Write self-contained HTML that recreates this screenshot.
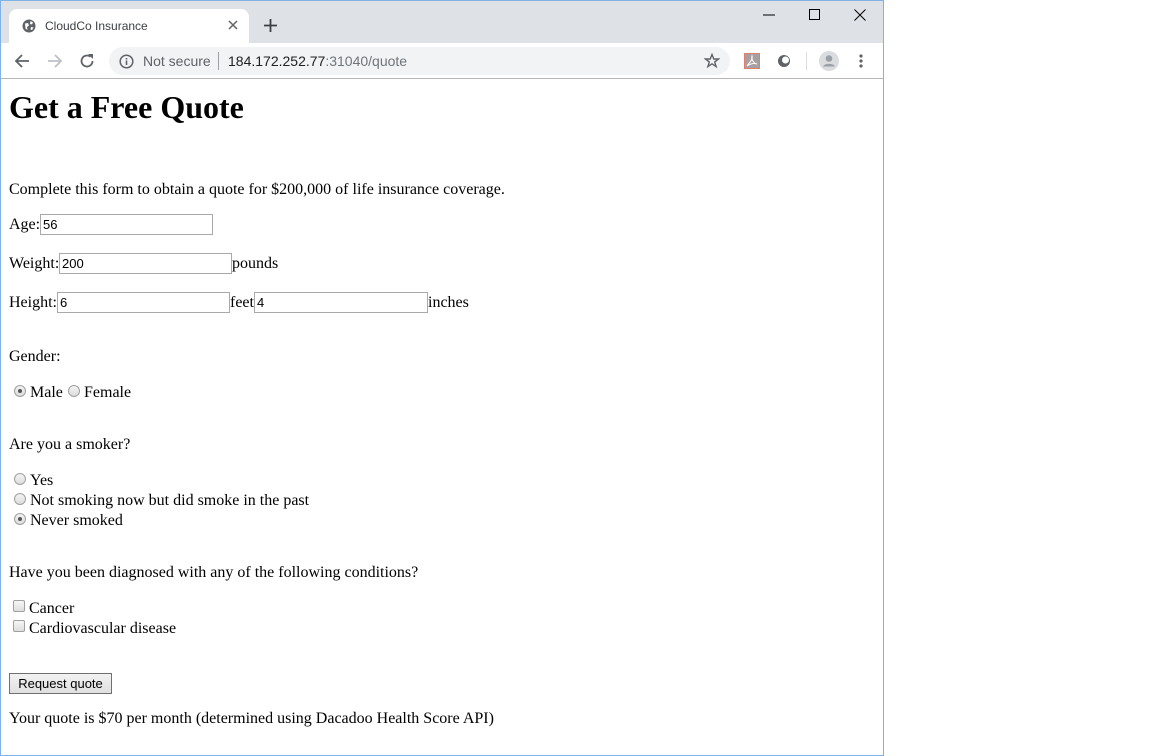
<!DOCTYPE html>
<html><head><meta charset="utf-8"><style>
*{margin:0;padding:0;box-sizing:border-box}
body{width:1152px;height:756px;background:#fff;position:relative;overflow:hidden;font-family:"Liberation Serif",serif;font-size:16px;color:#000}
.win{position:absolute;left:0;top:0;width:884px;height:756px;border:1px solid #7fb2e6;}
.a{position:absolute;white-space:nowrap;line-height:20px}
.t{margin-top:1px}
.ui{font-family:"Liberation Sans",sans-serif}
.inp{position:absolute;height:21px;border:1px solid #a9a9a9;background:#fff;font-family:"Liberation Sans",sans-serif;font-size:13px;line-height:19px;padding-left:2px}
.rad{position:absolute;width:12px;height:12px;border-radius:50%;border:1px solid #a0a0a0;background:linear-gradient(#f4f4f4,#dcdcdc)}
.rad.on::after{content:"";position:absolute;left:3px;top:3px;width:4px;height:4px;border-radius:50%;background:#555}
.chk{position:absolute;width:12px;height:12px;border:1px solid #a0a0a0;border-radius:2px;background:linear-gradient(#f6f6f6,#dedede)}
</style></head><body>
<div class="win"></div>
<div style="position:absolute;left:1px;top:1px;width:882px;height:42px;background:#dee1e6"></div>
<div style="position:absolute;left:9px;top:9px;width:240px;height:34px;background:#fff;border-radius:8px 8px 0 0"></div>
<svg style="position:absolute;left:22px;top:19px" width="14" height="14" viewBox="0 0 14 14"><circle cx="7" cy="7" r="6.5" fill="#5f6368"/><path d="M3 4.5 L6 4 L7 6.5 L5 8 L5.5 11 L3.5 9.5 Z M8.5 2 L11 3.5 L10 5.5 L8 5 Z M9 8 L11.5 8.5 L10 11 L8.5 10.5Z" fill="#fff"/></svg>
<div class="a ui" style="left:45px;top:16px;font-size:12px;color:#3c4043">CloudCo Insurance</div>
<svg style="position:absolute;left:228px;top:20px" width="10" height="10"><path d="M1 1L9 9M9 1L1 9" stroke="#5f6368" stroke-width="1.5"/></svg>
<svg style="position:absolute;left:264px;top:19px" width="13" height="13"><path d="M6.5 0V13M0 6.5H13" stroke="#3c4043" stroke-width="1.8"/></svg>
<svg style="position:absolute;left:763px;top:14px" width="12" height="2"><path d="M0 1H12" stroke="#000"/></svg>
<svg style="position:absolute;left:809px;top:9px" width="11" height="11"><rect x="0.5" y="0.5" width="10" height="10" fill="none" stroke="#000"/></svg>
<svg style="position:absolute;left:854px;top:9px" width="12" height="12"><path d="M0.5 0.5L11.5 11.5M11.5 0.5L0.5 11.5" stroke="#000"/></svg>
<div style="position:absolute;left:1px;top:43px;width:882px;height:36px;background:#fff;border-bottom:1px solid #b6b6b6"></div>
<svg style="position:absolute;left:14px;top:53px" width="16" height="16"><path d="M15 8H2M8 2L2 8L8 14" stroke="#5f6368" stroke-width="1.8" fill="none"/></svg>
<svg style="position:absolute;left:47px;top:53px" width="16" height="16"><path d="M1 8H14M8 2L14 8L8 14" stroke="#bdc1c6" stroke-width="1.8" fill="none"/></svg>
<svg style="position:absolute;left:79px;top:53px" width="16" height="16"><path d="M13.5 8A5.5 5.5 0 1 1 11.5 3.8" stroke="#5f6368" stroke-width="1.8" fill="none"/><path d="M9 1H14V6Z" fill="#5f6368"/></svg>
<div style="position:absolute;left:109px;top:47px;width:621px;height:28px;border-radius:14px;background:#f1f3f4"></div>
<svg style="position:absolute;left:119px;top:54px" width="15" height="15"><circle cx="7.5" cy="7.5" r="6.3" fill="none" stroke="#5f6368" stroke-width="1.5"/><path d="M7.5 6.5V11M7.5 4V5.5" stroke="#5f6368" stroke-width="1.6"/></svg>
<div class="a ui" style="left:143px;top:51px;font-size:14px;color:#5f6368">Not secure</div>
<div style="position:absolute;left:218px;top:52px;width:1px;height:18px;background:#9aa0a6"></div>
<div class="a ui" style="left:228px;top:51px;font-size:14px;color:#202124">184.172.252.77<span style="color:#70757a">:31040/quote</span></div>
<svg style="position:absolute;left:704px;top:53px" width="16" height="16"><path d="M8 1.5L9.8 6H14.5L10.7 8.9L12.1 13.6L8 10.8L3.9 13.6L5.3 8.9L1.5 6H6.2Z" fill="none" stroke="#5f6368" stroke-width="1.4"/></svg>
<div style="position:absolute;left:744px;top:53px;width:16px;height:16px;background:#a8a0a0;border:1px solid #e07f6f"></div>
<svg style="position:absolute;left:744px;top:53px" width="16" height="16"><path d="M3 13C6 9 9 6 8 3C7 6 10 11 13 11C10 10 6 11 3 13Z" fill="none" stroke="#fff" stroke-width="1"/></svg>
<svg style="position:absolute;left:777px;top:54px" width="14" height="14"><circle cx="7" cy="7" r="6" fill="#5f6368"/><circle cx="8.5" cy="6" r="3.5" fill="#fff"/></svg>
<div style="position:absolute;left:806px;top:52px;width:1px;height:18px;background:#dadce0"></div>
<svg style="position:absolute;left:819px;top:51px" width="20" height="20"><circle cx="10" cy="10" r="10" fill="#dadce0"/><circle cx="10" cy="7.5" r="3.3" fill="#9aa0a6"/><path d="M4 15.5C5.5 12 14.5 12 16 15.5Z" fill="#9aa0a6"/></svg>
<svg style="position:absolute;left:859px;top:54px" width="4" height="14"><circle cx="2" cy="2" r="1.6" fill="#5f6368"/><circle cx="2" cy="7" r="1.6" fill="#5f6368"/><circle cx="2" cy="12" r="1.6" fill="#5f6368"/></svg>
<div class="a" style="left:9px;top:89px;font-size:32px;font-weight:bold;line-height:37px">Get a Free Quote</div>
<div class="a t" style="left:9px;top:179px">Complete this form to obtain a quote for $200,000 of life insurance coverage.</div>
<div class="a t" style="left:9px;top:214px">Age:</div>
<div class="inp" style="left:40px;top:214px;width:173px">56</div>
<div class="a t" style="left:9px;top:253px">Weight:</div>
<div class="inp" style="left:59px;top:253px;width:173px">200</div>
<div class="a t" style="left:232px;top:253px">pounds</div>
<div class="a t" style="left:9px;top:292px">Height:</div>
<div class="inp" style="left:57px;top:292px;width:173px">6</div>
<div class="a t" style="left:230px;top:292px">feet</div>
<div class="inp" style="left:254px;top:292px;width:174px">4</div>
<div class="a t" style="left:428px;top:292px">inches</div>
<div class="a t" style="left:9px;top:346px">Gender:</div>
<div class="rad on" style="left:14px;top:385px"></div>
<div class="a t" style="left:30px;top:382px">Male</div>
<div class="rad" style="left:68px;top:385px"></div>
<div class="a t" style="left:84px;top:382px">Female</div>
<div class="a t" style="left:9px;top:434px">Are you a smoker?</div>
<div class="rad" style="left:14px;top:473px"></div>
<div class="a t" style="left:30px;top:470px">Yes</div>
<div class="rad" style="left:14px;top:493px"></div>
<div class="a t" style="left:30px;top:490px">Not smoking now but did smoke in the past</div>
<div class="rad on" style="left:14px;top:513px"></div>
<div class="a t" style="left:30px;top:510px">Never smoked</div>
<div class="a t" style="left:9px;top:562px">Have you been diagnosed with any of the following conditions?</div>
<div class="chk" style="left:13px;top:600px"></div>
<div class="a t" style="left:29px;top:598px">Cancer</div>
<div class="chk" style="left:13px;top:620px"></div>
<div class="a t" style="left:29px;top:618px">Cardiovascular disease</div>
<div style="position:absolute;left:9px;top:673px;width:103px;height:21px;border:1px solid #707070;background:linear-gradient(#f2f2f2,#e0e0e0);font-family:'Liberation Sans',sans-serif;font-size:13px;line-height:19px;text-align:center">Request quote</div>
<div class="a t" style="left:9px;top:708px">Your quote is $70 per month (determined using Dacadoo Health Score API)</div>
</body></html>
